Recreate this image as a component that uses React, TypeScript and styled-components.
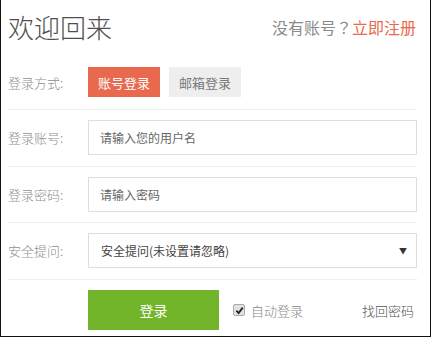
import React from "react";
import styled, { createGlobalStyle } from "styled-components";

const Global = createGlobalStyle`
  html, body { margin: 0; padding: 0; background: #fff; }
  body { font-family: "Noto Sans CJK SC", "Noto Sans", "Liberation Sans", sans-serif; font-weight: 300; }
  * { box-sizing: border-box; }
`;

const Page = styled.div`
  width: 431px;
  height: 337px;
  border-left: 1px solid #111;
  border-right: 1px solid #111;
  border-bottom: 1px solid #111;
  padding: 0 13px 0 7px;
  background: #fff;
  display: flex;
  flex-direction: column;
`;

const Header = styled.div`
  height: 52px;
  display: flex;
  align-items: center;
  justify-content: space-between;
  padding-top: 2px;
`;

const Title = styled.h1`
  margin: 0;
  font-size: 26px;
  font-weight: 300;
  color: #4f4f4f;
  line-height: 1;
`;

const Register = styled.div`
  font-size: 16px;
  font-weight: 400;
  color: #8a8a8a;
  line-height: 1;
  padding-right: 1px;
`;

const Question = styled.span`
  font-family: "Noto Sans CJK JP", "Noto Sans CJK SC", sans-serif;
`;

const RegLink = styled.a`
  color: #e8694c;
  text-decoration: none;
`;

const Row = styled.div<{ $pt: number; $pb: number; $last?: boolean }>`
  display: flex;
  align-items: center;
  padding: ${(p) => p.$pt}px 0 ${(p) => p.$pb}px;
  border-bottom: ${(p) => (p.$last ? "none" : "1px solid #eeeeee")};
`;

const Label = styled.div`
  width: 80px;
  flex-shrink: 0;
  font-size: 13px;
  color: #8f8f8f;
`;

const ModeButton = styled.button<{ $active?: boolean }>`
  height: 30px;
  padding: 0 10px;
  margin-right: 9px;
  border: none;
  font-family: inherit;
  font-weight: 400;
  font-size: 13px;
  background: ${(p) => (p.$active ? "#e9694e" : "#eeeeee")};
  color: ${(p) => (p.$active ? "#fff" : "#777")};
`;

const Field = styled.div`
  flex: 1;
  height: 35px;
  border: 1px solid #dedede;
  display: flex;
  align-items: center;
  padding: 0 10px 0 11px;
  font-size: 12px;
  font-weight: 400;
  color: #666;
`;

const SelectField = styled(Field)`
  padding-left: 12px;
  color: #444;
  justify-content: space-between;
`;

const Arrow = styled.span`
  font-size: 8px;
  color: #333;
  margin-right: -1px;
`;

const LoginButton = styled.button`
  width: 131px;
  height: 40px;
  border: none;
  background: #72b52a;
  color: #fff;
  font-family: inherit;
  font-weight: 400;
  font-size: 14px;
`;

const Auto = styled.label`
  display: flex;
  align-items: center;
  margin-left: 14px;
  font-size: 13px;
  color: #888;
`;

const Box = styled.span`
  width: 12px;
  height: 12px;
  border: 1px solid #aaa;
  border-radius: 2px;
  background: #e2e2e2;
  display: inline-flex;
  align-items: center;
  justify-content: center;
  margin-right: 6px;
`;

const Forgot = styled.a`
  margin-left: auto;
  font-size: 13px;
  color: #555;
  text-decoration: none;
  padding-right: 3px;
`;

export default function App() {
  return (
    <>
      <Global />
      <Page>
        <Header>
          <Title>欢迎回来</Title>
          <Register>
            没有账号<Question>？</Question>
            <RegLink href="#">立即注册</RegLink>
          </Register>
        </Header>
        <Row $pt={15} $pb={12}>
          <Label>登录方式:</Label>
          <ModeButton $active>账号登录</ModeButton>
          <ModeButton>邮箱登录</ModeButton>
        </Row>
        <Row $pt={10} $pb={11}>
          <Label>登录账号:</Label>
          <Field>请输入您的用户名</Field>
        </Row>
        <Row $pt={10} $pb={10}>
          <Label>登录密码:</Label>
          <Field>请输入密码</Field>
        </Row>
        <Row $pt={10} $pb={11}>
          <Label>安全提问:</Label>
          <SelectField>
            <span>安全提问(未设置请忽略)</span>
            <Arrow>▼</Arrow>
          </SelectField>
        </Row>
        <Row $pt={10} $pb={0} $last>
          <Label />
          <LoginButton>登录</LoginButton>
          <Auto>
            <Box>
              <svg width="9" height="9" viewBox="0 0 10 10">
                <path d="M1.5 5.2 L4 7.8 L8.6 1.8" fill="none" stroke="#222" strokeWidth="2" />
              </svg>
            </Box>
            自动登录
          </Auto>
          <Forgot href="#">找回密码</Forgot>
        </Row>
      </Page>
    </>
  );
}
